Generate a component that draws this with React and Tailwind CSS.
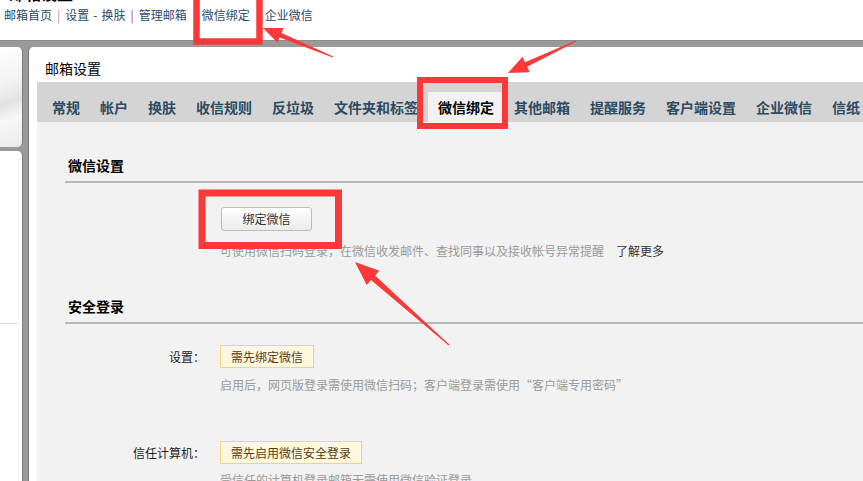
import React from "react";

function arrowPoints(T, H, L, W, w1, w0) {
  const dx = H[0] - T[0];
  const dy = H[1] - T[1];
  const len = Math.hypot(dx, dy);
  const d = [dx / len, dy / len];
  const n = [-d[1], d[0]];
  const B = [H[0] - d[0] * L, H[1] - d[1] * L];
  const p = (base, s) => [base[0] + n[0] * s, base[1] + n[1] * s];
  const pts = [
    p(T, w0 / 2),
    p(B, w1 / 2),
    p(B, W / 2),
    H,
    p(B, -W / 2),
    p(B, -w1 / 2),
    p(T, -w0 / 2),
  ];
  return pts.map((q) => q[0].toFixed(1) + "," + q[1].toFixed(1)).join(" ");
}

const tabs = [
  "常规",
  "帐户",
  "换肤",
  "收信规则",
  "反垃圾",
  "文件夹和标签",
  "微信绑定",
  "其他邮箱",
  "提醒服务",
  "客户端设置",
  "企业微信",
  "信纸",
];

export default function App() {
  const red = "#fd3838";
  return (
    <div className="relative w-[863px] h-[481px] overflow-hidden bg-white font-['Noto_Sans_CJK_SC',sans-serif]">
      {/* top */}
      <div className="h-[40px]">
        <div className="h-[3px] overflow-hidden pl-[9px]">
          <div className="-mt-[15px] text-[16px] leading-[16px] font-bold text-black">邮箱设置</div>
        </div>
        <div className="mt-[3px] pl-[4px] flex items-center text-[12px] leading-[18px] text-[#2a4b6b] whitespace-nowrap">
          <span>邮箱首页</span>
          <span className="mx-[5px] text-[#9a9a9a]">|</span>
          <span>设置</span>
          <span className="mx-[4px] text-[#333]">-</span>
          <span>换肤</span>
          <span className="mx-[5px] text-[#a0521d]">|</span>
          <span>管理邮箱</span>
          <span className="ml-[15px]">微信绑定</span>
          <span className="ml-[15px]">企业微信</span>
        </div>
      </div>

      {/* frame */}
      <div className="flex h-[441px] bg-[#9a9a9a] pt-[6px] border-t border-[#8d8d8d]">
        {/* left sidebar */}
        <div className="w-[23px] shrink-0 flex flex-col">
          <div className="h-[100px] shrink-0 rounded-r-[5px] border-r border-[#7d7d7d] bg-[linear-gradient(160deg,#ffffff_0%,#f3f3f3_35%,#e2e2e2_55%,#f7f7f7_70%,#ececec_100%)]" />
          <div className="mt-[4px] flex-1 rounded-tr-[5px] border-r border-[#7d7d7d] bg-white pt-[172px]">
            <div className="h-px w-[18px] bg-[#dddddd]" />
          </div>
        </div>

        {/* main panel */}
        <div className="ml-[5px] flex-1 min-w-0 flex flex-col overflow-hidden rounded-tl-[5px] border-l border-[#777] bg-white">
          <div className="shrink-0 pt-[12px] pl-[16px] text-[14px] leading-[18px] text-black">邮箱设置</div>
          <div className="shrink-0 mt-[5px] ml-[8px] h-[40px] pt-[10px] pl-[5px] flex bg-[#d4d4d4] whitespace-nowrap overflow-hidden">
            {tabs.map((t) => (
              <div
                key={t}
                className={
                  t === "微信绑定"
                    ? "shrink-0 h-[30px] px-[10px] text-[14px] leading-[30px] font-bold text-black bg-[#f2f2f2]"
                    : "shrink-0 h-[30px] px-[10px] text-[14px] leading-[30px] font-bold text-[#2c4a62]"
                }
              >
                {t}
              </div>
            ))}
          </div>

          <div className="ml-[8px] flex-1 shrink-0 bg-[#f2f2f2] pl-[28px] pt-[33px]">
            <div className="pl-[3px] pb-[6px] text-[14px] leading-[20px] font-bold text-black border-b-2 border-[#b8b8b8]">
              微信设置
            </div>
            <div className="ml-[156px] mt-[24px]">
              <div className="w-[91px] h-[24px] flex items-center justify-center rounded-[3px] border border-[#bdbdbd] bg-gradient-to-b from-white to-[#ebebeb] text-[12px] text-[#333]">
                绑定微信
              </div>
            </div>
            <div className="ml-[155px] mt-[11px] text-[12px] leading-[18px] text-[#9a9a9a] whitespace-nowrap">
              可使用微信扫码登录，在微信收发邮件、查找同事以及接收帐号异常提醒
              <span className="ml-[12px] text-[#333]">了解更多</span>
            </div>

            <div className="mt-[36px] pl-[3px] pb-[6px] text-[14px] leading-[20px] font-bold text-black border-b-2 border-[#b8b8b8]">
              安全登录
            </div>

            <div className="mt-[21px] flex items-center">
              <div className="w-[140px] text-right text-[12px] text-[#222]">设置：</div>
              <div className="ml-[15px] h-[23px] px-[10px] flex items-center border border-[#f3d37c] bg-[#fff8e1] text-[12px] text-[#5c3b12]">
                需先绑定微信
              </div>
            </div>
            <div className="ml-[155px] mt-[8px] text-[12px] leading-[18px] text-[#9a9a9a] whitespace-nowrap">
              启用后，网页版登录需使用微信扫码；客户端登录需使用“客户端专用密码”
            </div>

            <div className="mt-[47px] flex items-center">
              <div className="w-[140px] text-right text-[12px] text-[#222]">信任计算机：</div>
              <div className="ml-[15px] h-[23px] px-[10px] flex items-center border border-[#f3d37c] bg-[#fff8e1] text-[12px] text-[#5c3b12]">
                需先启用微信安全登录
              </div>
            </div>
            <div className="ml-[155px] mt-[7px] text-[12px] leading-[18px] text-[#9a9a9a] whitespace-nowrap">
              受信任的计算机登录邮箱无需使用微信验证登录
            </div>
          </div>
        </div>
      </div>

      {/* annotations */}
      <svg className="absolute inset-0 pointer-events-none" width="863" height="481" viewBox="0 0 863 481">
        <rect x="196.5" y="-10" width="63" height="51.5" fill="none" stroke={red} strokeWidth="6.5" />
        <rect x="420" y="80" width="85" height="46" fill="none" stroke={red} strokeWidth="6" />
        <rect x="202" y="193" width="136.5" height="52.5" fill="none" stroke={red} strokeWidth="7" />
        <polygon points={arrowPoints([333, 57], [263, 28], 19, 16, 5, 1)} fill={red} />
        <polygon points={arrowPoints([576, 41], [508, 73], 20, 17, 5, 1)} fill={red} />
        <polygon points={arrowPoints([449, 345], [355, 262], 24, 19, 6, 1)} fill={red} />
      </svg>
    </div>
  );
}
